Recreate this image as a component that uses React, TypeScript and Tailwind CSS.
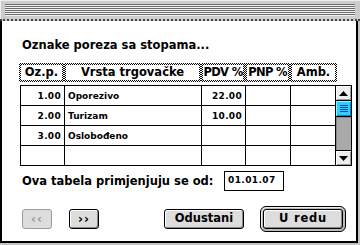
import React from "react";

const rows = [
  { oz: "1.00", name: "Oporezivo", pdv: "22.00" },
  { oz: "2.00", name: "Turizam", pdv: "10.00" },
  { oz: "3.00", name: "Oslobođeno", pdv: "" },
  { oz: "", name: "", pdv: "" },
];

function Btn({ children, w, disabled }: { children: React.ReactNode; w: string; disabled?: boolean }) {
  return (
    <div
      className={
        "h-[20px] rounded-[3px] flex items-center justify-center bg-[#dddddd] " +
        w +
        (disabled
          ? " border border-[#9a9a9a] text-[#9a9a9a]"
          : " border border-black text-black shadow-[inset_1px_1px_0_#ffffff,inset_-1px_-1px_0_#888888]")
      }
    >
      {children}
    </div>
  );
}

function HeadCell({ w, children, tight }: { w: string; children: React.ReactNode; tight?: boolean }) {
  return (
    <div
      className={
        "p-[2px] bg-[repeating-conic-gradient(#000_0_25%,#fff_0_50%)] [background-size:2px_2px] " + w
      }
    >
      <div className={"h-full bg-white flex items-center justify-center " + (tight ? "tracking-[-0.7px]" : "")}>
        {children}
      </div>
    </div>
  );
}

export default function App() {
  return (
    <div className="w-[360px] h-[245px] bg-[#c4c4c4] font-['DejaVu_Sans',sans-serif] font-bold text-black overflow-hidden">
      {/* title bar */}
      <div className="h-[21px] w-[360px] bg-[#cccccc] border-b-2 border-dotted border-[#444] flex items-start pt-[4px] px-[5px] shadow-[inset_1px_1px_0_#eeeeee]">
        <div className="w-[350px] h-[12px] bg-[repeating-linear-gradient(to_bottom,#6b6b6b_0px,#6b6b6b_1px,#f2f2f2_1px,#f2f2f2_2px)]" />
      </div>
      {/* window body */}
      <div className="w-[358px] h-[222px] bg-white border-l-2 border-r-2 border-b-2 border-black flex flex-col">
        <div className="mt-[17px] ml-[20px] h-[14px] leading-[14px] text-[11.5px] whitespace-nowrap">Oznake poreza sa stopama...</div>

        {/* header */}
        <div className="mt-[11px] ml-[17px] flex h-[19px] text-[11.5px] leading-[15px] whitespace-nowrap">
          <HeadCell w="w-[45px]">Oz.p.</HeadCell>
          <HeadCell w="w-[137px]">Vrsta trgovačke</HeadCell>
          <HeadCell w="w-[44px]" tight>PDV %</HeadCell>
          <HeadCell w="w-[45px]" tight>PNP %</HeadCell>
          <HeadCell w="w-[47px]">Amb.</HeadCell>
        </div>

        {/* body table */}
        <div className="mt-[3px] ml-[18px] w-[332px] h-[81px] border border-black flex">
          <div className="flex flex-col text-[9px] leading-[12px] whitespace-nowrap">
            {rows.map((r, i) => (
              <div key={i} className={"flex " + (i < 3 ? "h-[20px] border-b border-black" : "h-[19px]")}>
                <div className="w-[44px] border-r border-black flex items-center justify-end pr-[3px] tracking-[0.3px]">{r.oz}</div>
                <div className="w-[137px] border-r border-black flex items-center pl-[3px]">{r.name}</div>
                <div className="w-[44px] border-r border-black flex items-center justify-end pr-[3px] tracking-[0.3px]">{r.pdv}</div>
                <div className="w-[45px] border-r border-black" />
                <div className="w-[44px]" />
              </div>
            ))}
          </div>
          {/* scrollbar */}
          <div className="w-[16px] border-l border-black flex flex-col">
            <div className="h-[15px] border-b border-black bg-[#eeeeee] shadow-[inset_1px_1px_0_#ffffff,inset_-1px_-1px_0_#999999] flex items-center justify-center">
              <svg width="9" height="5" viewBox="0 0 9 5"><path d="M4.5 0 L9 5 L0 5 Z" fill="#000" /></svg>
            </div>
            <div className="h-[16px] border-b border-black bg-[#33ccff] flex flex-col items-center justify-center gap-[1px] shadow-[inset_1px_1px_0_#99eeff,inset_-1px_-1px_0_#0088cc]">
              <div className="w-[8px] h-[1px] bg-[#0055aa]" />
              <div className="w-[8px] h-[1px] bg-[#0055aa]" />
              <div className="w-[8px] h-[1px] bg-[#0055aa]" />
              <div className="w-[8px] h-[1px] bg-[#0055aa]" />
            </div>
            <div className="flex-1 border-b border-black bg-[#a9a9a9] shadow-[inset_1px_1px_0_#888888]" />
            <div className="h-[14px] bg-[#eeeeee] shadow-[inset_1px_1px_0_#ffffff,inset_-1px_-1px_0_#999999] flex items-center justify-center">
              <svg width="9" height="5" viewBox="0 0 9 5"><path d="M0 0 L9 0 L4.5 5 Z" fill="#000" /></svg>
            </div>
          </div>
        </div>

        {/* date row */}
        <div className="mt-[5px] ml-[20px] flex items-center h-[20px]">
          <div className="w-[202px] text-[11.5px] leading-[14px] whitespace-nowrap">Ova tabela primjenjuju se od:</div>
          <div className="w-[60px] h-[20px] border border-black flex items-center pl-[3px] text-[9px] tracking-[0.4px]">01.01.07</div>
        </div>

        {/* buttons */}
        <div className="mt-[15px] ml-[20px] flex items-center h-[26px] text-[11.5px] whitespace-nowrap">
          <Btn w="w-[30px]" disabled>
            <span className="text-[12px] leading-[12px] tracking-[1px]">‹‹</span>
          </Btn>
          <div className="ml-[17px]">
            <Btn w="w-[30px]">
              <span className="text-[12px] leading-[12px] tracking-[1px]">››</span>
            </Btn>
          </div>
          <div className="ml-[65px]">
            <Btn w="w-[80px]">Odustani</Btn>
          </div>
          <div className="ml-[16px] w-[86px] h-[26px] rounded-[6px] border border-black bg-[#bbbbbb] p-[2px] shadow-[inset_1px_1px_0_#eeeeee]">
            <Btn w="w-[80px]">
              <span className="tracking-[0.8px]">U redu</span>
            </Btn>
          </div>
        </div>
      </div>
    </div>
  );
}
